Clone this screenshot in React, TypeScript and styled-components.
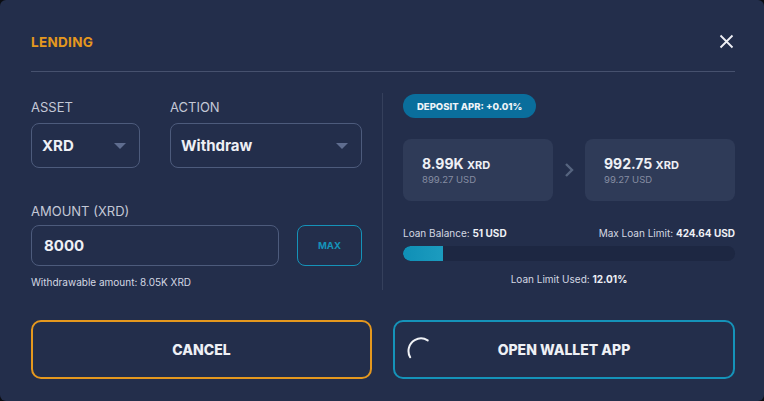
import React from 'react';
import styled, {createGlobalStyle} from 'styled-components';

const Global = createGlobalStyle`
  html, body {
    margin: 0;
    background: #0b0d12;
  }
  * {
    box-sizing: border-box;
  }
`;

const Modal = styled.div`
  width: 764px;
  height: 401px;
  background: #232e4b;
  border-radius: 6px;
  padding: 0 29px 0 31px;
  font-family: Inter, "Liberation Sans", sans-serif;
  color: #e9ebf2;
  display: flex;
  flex-direction: column;
`;

const Header = styled.div`
  height: 72px;
  padding-top: 12px;
  border-bottom: 1px solid #46516e;
  display: flex;
  align-items: center;
  justify-content: space-between;
`;

const Title = styled.h2`
  margin: 0;
  font-size: 13.5px;
  font-weight: 700;
  letter-spacing: 0.3px;
  color: #e5981e;
`;

const Close = styled.button`
  border: none;
  background: none;
  padding: 0;
  margin-right: 1px;
  width: 16px;
  height: 16px;
  display: flex;
  align-items: center;
  justify-content: center;
`;

const Body = styled.div`
  margin-top: 21px;
  display: grid;
  grid-template-columns: 352px 1fr;
  height: 197px;
`;

const LeftCol = styled.div`
  border-right: 1px solid #35405c;
  padding-right: 20px;
  padding-top: 6px;
`;

const RightCol = styled.div`
  padding-left: 20px;
  padding-top: 1px;
  display: flex;
  flex-direction: column;
`;

const Row = styled.div<{$gap: number}>`
  display: flex;
  gap: ${p => p.$gap}px;
`;

const Field = styled.div<{$w: number}>`
  width: ${p => p.$w}px;
  display: flex;
  flex-direction: column;
  gap: 8px;
`;

const Label = styled.label`
  font-size: 13px;
  line-height: 16px;
  color: #c3c8d6;
`;

const Select = styled.div`
  height: 45px;
  border: 1px solid #4d5b7c;
  border-radius: 8px;
  padding: 0 13px 0 10px;
  display: flex;
  align-items: center;
  justify-content: space-between;
  font-size: 15px;
  font-weight: 700;
  color: #eef0f5;
`;

const Caret = styled.span`
  width: 0;
  height: 0;
  border-left: 6px solid transparent;
  border-right: 6px solid transparent;
  border-top: 6px solid #5f6d8f;
`;

const AmountBlock = styled.div`
  margin-top: 35px;
  display: flex;
  flex-direction: column;
  gap: 6px;
`;

const Input = styled.div`
  flex: 1;
  height: 41px;
  border: 1px solid #4d5b7c;
  border-radius: 8px;
  padding: 0 12px;
  display: flex;
  align-items: center;
  font-size: 15px;
  font-weight: 700;
  color: #eef0f5;
`;

const MaxButton = styled.button`
  width: 65px;
  height: 41px;
  border: 1px solid #1593b9;
  border-radius: 8px;
  background: none;
  color: #1593b9;
  font-family: inherit;
  font-size: 9.5px;
  font-weight: 700;
`;

const Hint = styled.div`
  margin-top: 3px;
  font-size: 10px;
  line-height: 14px;
  color: #d4d8e3;
`;

const Badge = styled.div`
  align-self: flex-start;
  height: 24px;
  padding: 0 14px;
  border-radius: 12px;
  background: #0a6e9c;
  display: flex;
  align-items: center;
  font-size: 9.5px;
  font-weight: 800;
  color: #eef3f8;
`;

const Balances = styled.div`
  margin-top: 21px;
  display: flex;
  align-items: center;
  gap: 9px;
`;

const Card = styled.div`
  flex: 1;
  height: 62px;
  border-radius: 8px;
  background: #2f3b58;
  padding: 16px 19px 0;
`;

const Big = styled.div`
  font-size: 14px;
  font-weight: 700;
  line-height: 18px;
  color: #eef0f5;

  small {
    font-size: 11px;
  }
`;

const Sub = styled.div`
  font-size: 9.5px;
  line-height: 12px;
  color: #868da2;
`;

const LoanLine = styled.div`
  margin-top: 26px;
  display: flex;
  justify-content: space-between;
  font-size: 10px;
  line-height: 12px;
  color: #d4d8e3;

  b {
    color: #eef0f5;
  }
`;

const Track = styled.div`
  margin-top: 7px;
  height: 15px;
  border-radius: 8px;
  background: #1d2742;
  overflow: hidden;
`;

const Fill = styled.div`
  height: 100%;
  background: linear-gradient(90deg, #0f8fb6, #1c9cbf);
  border-radius: 8px 0 0 8px;
`;

const Centered = styled.div`
  margin-top: 12px;
  text-align: center;
  font-size: 10px;
  line-height: 12px;
  color: #d4d8e3;

  b {
    color: #eef0f5;
  }
`;

const Actions = styled.div`
  margin-top: 30px;
  display: grid;
  grid-template-columns: 341px 1fr;
  gap: 21px;
`;

const ActionButton = styled.button<{$tone: string}>`
  position: relative;
  height: 59px;
  border: 2px solid ${p => p.$tone};
  border-radius: 10px;
  background: none;
  color: #eef0f5;
  font-family: inherit;
  font-size: 14px;
  font-weight: 800;
`;

const Spinner = styled.svg`
  position: absolute;
  left: 12px;
  top: 15px;
`;

function Chevron() {
  return (
    <svg width="14" height="16" viewBox="0 0 14 16">
      <path d="M4 2 L10 8 L4 14" fill="none" stroke="#56647f" strokeWidth="2.4"/>
    </svg>
  );
}

function App() {
  return (
    <>
      <Global/>
      <Modal>
        <Header>
          <Title>LENDING</Title>
          <Close>
            <svg width="15" height="15" viewBox="0 0 15 15">
              <path d="M1.5 1.5 L13.5 13.5 M13.5 1.5 L1.5 13.5" stroke="#eef0f5" strokeWidth="1.8"/>
            </svg>
          </Close>
        </Header>
        <Body>
          <LeftCol>
            <Row $gap={30}>
              <Field $w={109}>
                <Label>ASSET</Label>
                <Select>XRD<Caret/></Select>
              </Field>
              <Field $w={192}>
                <Label>ACTION</Label>
                <Select>Withdraw<Caret/></Select>
              </Field>
            </Row>
            <AmountBlock>
              <Label>AMOUNT (XRD)</Label>
              <Row $gap={18}>
                <Input>8000</Input>
                <MaxButton>MAX</MaxButton>
              </Row>
              <Hint>Withdrawable amount: 8.05K XRD</Hint>
            </AmountBlock>
          </LeftCol>
          <RightCol>
            <Badge>DEPOSIT APR: +0.01%</Badge>
            <Balances>
              <Card>
                <Big>8.99K <small>XRD</small></Big>
                <Sub>899.27 USD</Sub>
              </Card>
              <Chevron/>
              <Card>
                <Big>992.75 <small>XRD</small></Big>
                <Sub>99.27 USD</Sub>
              </Card>
            </Balances>
            <LoanLine>
              <span>Loan Balance: <b>51 USD</b></span>
              <span>Max Loan Limit: <b>424.64 USD</b></span>
            </LoanLine>
            <Track>
              <Fill style={{width: '12.01%'}}/>
            </Track>
            <Centered>Loan Limit Used: <b>12.01%</b></Centered>
          </RightCol>
        </Body>
        <Actions>
          <ActionButton $tone="#e5981e">CANCEL</ActionButton>
          <ActionButton $tone="#1593b9">
            <Spinner width="28" height="28" viewBox="0 0 28 28">
              <circle cx="14" cy="14" r="12.5" fill="none" stroke="#f0f2f6" strokeWidth="2"
                      strokeDasharray="33 100" transform="rotate(150 14 14)" strokeLinecap="round"/>
            </Spinner>
            OPEN WALLET APP
          </ActionButton>
        </Actions>
      </Modal>
    </>
  );
}

export default App;
